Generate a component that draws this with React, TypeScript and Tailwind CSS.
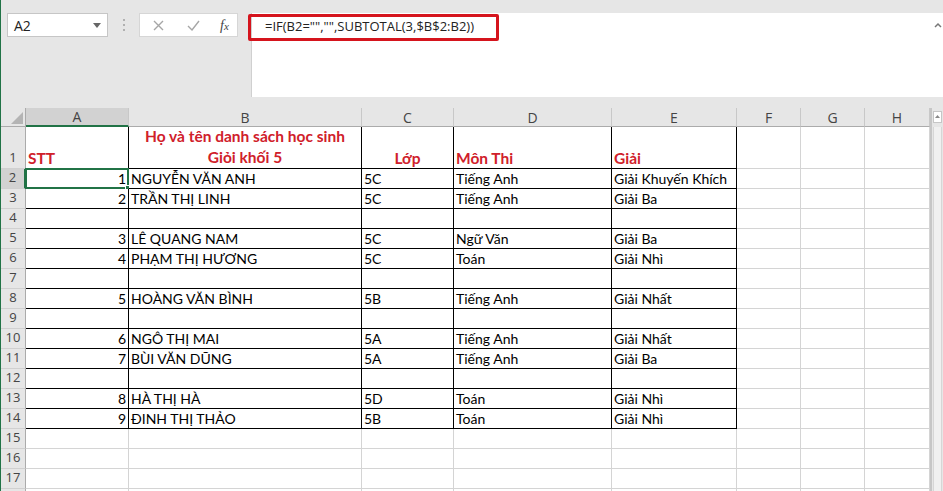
import { Fragment } from 'react';

type Row = { n: number; h: string; cells: string[] };

const colWidths = ['w-[103px]', 'w-[233px]', 'w-[92px]', 'w-[158px]', 'w-[125px]', 'w-[64px]', 'w-[64px]', 'w-[65px]'];
const colLetters = ['A', 'B', 'C', 'D', 'E', 'F', 'G', 'H'];

const students = [
  ['1', 'NGUYỄN VĂN ANH', '5C', 'Tiếng Anh', 'Giải Khuyến Khích'],
  ['2', 'TRẦN THỊ LINH', '5C', 'Tiếng Anh', 'Giải Ba'],
  [],
  ['3', 'LÊ QUANG NAM', '5C', 'Ngữ Văn', 'Giải Ba'],
  ['4', 'PHẠM THỊ HƯƠNG', '5C', 'Toán', 'Giải Nhì'],
  [],
  ['5', 'HOÀNG VĂN BÌNH', '5B', 'Tiếng Anh', 'Giải Nhất'],
  [],
  ['6', 'NGÔ THỊ MAI', '5A', 'Tiếng Anh', 'Giải Nhất'],
  ['7', 'BÙI VĂN DŨNG', '5A', 'Tiếng Anh', 'Giải Ba'],
  [],
  ['8', 'HÀ THỊ HÀ', '5D', 'Toán', 'Giải Nhì'],
  ['9', 'ĐINH THỊ THẢO', '5B', 'Toán', 'Giải Nhì'],
];

const rows: Row[] = [
  ...students.map((cells, i) => ({ n: i + 2, h: 'h-[20px]', cells })),
  { n: 15, h: 'h-[20px]', cells: [] },
  { n: 16, h: 'h-[20px]', cells: [] },
  { n: 17, h: 'h-[20px]', cells: [] },
];

const cellFont = { fontFamily: 'Lato, "Noto Sans", sans-serif' };
const uiFont = { fontFamily: '"Open Sans", "Noto Sans", sans-serif' };

function FormulaBar() {
  return (
    <div className="h-[108px] flex items-start pt-[13px] relative">
      {/* name box */}
      <div className="ml-[6px] w-[101px] h-[24px] bg-white border border-[#c6c6c6] flex items-center justify-between pl-[6px] pr-[6px]">
        <span className="text-[14px] text-[#222]" style={uiFont}>A2</span>
        <svg width="8" height="5" viewBox="0 0 8 5"><path d="M0 0h8L4 5z" fill="#666" /></svg>
      </div>
      <div className="w-[31px] h-[24px] flex flex-col items-center justify-center gap-[3px]">
        <span className="w-[2px] h-[2px] bg-[#b0b0b0]" />
        <span className="w-[2px] h-[2px] bg-[#b0b0b0]" />
        <span className="w-[2px] h-[2px] bg-[#b0b0b0]" />
      </div>
      {/* cancel / enter / fx */}
      <div className="w-[99px] h-[24px] bg-white border border-[#d6d6d6] flex items-center">
        <svg className="ml-[13px]" width="11" height="11" viewBox="0 0 11 11">
          <path d="M1 1l9 9M10 1l-9 9" stroke="#a6a6a6" strokeWidth="1.4" />
        </svg>
        <svg className="ml-[23px]" width="13" height="11" viewBox="0 0 13 11">
          <path d="M1 6l4 4 7-9" stroke="#a6a6a6" strokeWidth="1.4" fill="none" />
        </svg>
        <span className="ml-[20px] text-[14px] italic text-[#444]" style={{ fontFamily: '"Liberation Serif", serif' }}>
          f<span className="text-[11px]">x</span>
        </span>
      </div>
      {/* formula input */}
      <div className="ml-[13px] flex-1 h-[84px] bg-white border-l border-[#d0d0d0] flex justify-between pl-[13px] pr-[1px]">
        <span className="text-[13px] text-[#222] mt-[4px]" style={uiFont}>
          =IF(B2="","",SUBTOTAL(3,$B$2:B2))
        </span>
        <svg className="mt-[9px]" width="8" height="6" viewBox="0 0 8 6">
          <path d="M1 5l3-3 3 3" stroke="#777" strokeWidth="1.5" fill="none" />
        </svg>
      </div>
      {/* highlight around the formula */}
      <div className="absolute left-[247px] top-[14px] w-[251px] h-[27px] border-[3px] border-[#d5141d] rounded-[2px]" />
    </div>
  );
}

function HeaderRow() {
  return (
    <div className="flex h-[19px]">
      <div className="w-[25px] bg-[#e6e6e6] border-r border-b border-[#ababab] flex items-end justify-end p-[2px]">
        <svg width="12" height="12" viewBox="0 0 12 12"><path d="M12 0v12H0z" fill="#b4b4b4" /></svg>
      </div>
      {colLetters.map((l, i) => (
        <div
          key={l}
          className={`${colWidths[i]} flex items-center justify-center text-[14px] text-[#444] border-r border-[#c8c8c8] ${
            i === 0 ? 'bg-[#d2d2d2] border-b-2 border-b-[#217346]' : 'bg-[#e6e6e6] border-b border-b-[#ababab]'
          }`}
          style={uiFont}
        >
          {l}
        </div>
      ))}
      <ScrollTop />
    </div>
  );
}

function ScrollTop() {
  return (
    <div className="flex-1 bg-[#e6e6e6] border-l-2 border-[#c6c6c6] flex justify-center pt-[3px]">
      <div className="w-[9px] h-[12px] bg-white border border-[#c6c6c6] flex justify-center pt-[3px]">
        <svg width="5" height="3" viewBox="0 0 5 3"><path d="M0 3l2.5-3L5 3z" fill="#888" /></svg>
      </div>
    </div>
  );
}

function RowHeader({ n, h, active }: { n: number; h: string; active?: boolean }) {
  return (
    <div
      className={`w-[25px] ${h} flex items-end justify-center pb-[1px] text-[13px] text-[#444] border-b border-[#d0d0d0] ${
        active ? 'bg-[#d2d2d2] border-r-2 border-r-[#217346]' : 'bg-[#e6e6e6] border-r border-r-[#ababab]'
      }`}
      style={uiFont}
    >
      {n}
    </div>
  );
}

function Cell({ row, col, text, h }: { row: number; col: number; text?: string; h: string }) {
  const inTable = col < 5 && row <= 14;
  const border = inTable ? 'border-black' : 'border-[#d4d4d4]';
  const align = col === 0 ? 'justify-end' : 'justify-start';
  const selected = row === 2 && col === 0;
  return (
    <div className={`${colWidths[col]} ${h} border-r border-b ${border} bg-white flex items-end ${align} px-[2px] text-[14px] leading-[18px] text-black relative whitespace-nowrap`}>
      {text}
      {selected && (
        <>
          <div className="absolute -left-[1px] -top-[1px] -right-[1px] -bottom-[1px] border-2 border-[#217346]" />
          <div className="absolute -right-[4px] -bottom-[4px] w-[7px] h-[7px] bg-[#217346] border border-white" />
        </>
      )}
    </div>
  );
}

function TitleRow() {
  return (
    <div className="flex h-[42px]" style={cellFont}>
      <RowHeader n={1} h="h-[42px]" />
      <div className="w-[103px] border-r border-b border-black bg-white flex items-end px-[2px] text-[15.5px] leading-[19px] font-bold text-[#d0202a]">STT</div>
      <div className="w-[233px] border-r border-b border-black bg-white flex flex-col items-center justify-end text-[15.5px] leading-[21px] font-bold text-[#d0202a]">
        <span>Họ và tên danh sách học sinh</span>
        <span>Giỏi khối 5</span>
      </div>
      <div className="w-[92px] border-r border-b border-black bg-white flex items-end justify-center px-[2px] text-[15.5px] leading-[19px] font-bold text-[#d0202a]">Lớp</div>
      <div className="w-[158px] border-r border-b border-black bg-white flex items-end px-[2px] text-[15.5px] leading-[19px] font-bold text-[#d0202a]">Môn Thi</div>
      <div className="w-[125px] border-r border-b border-black bg-white flex items-end px-[2px] text-[15.5px] leading-[19px] font-bold text-[#d0202a]">Giải</div>
      {[5, 6, 7].map((c) => (
        <div key={c} className={`${colWidths[c]} border-r border-b border-[#d4d4d4] bg-white`} />
      ))}
      <ScrollTrack />
    </div>
  );
}

function ScrollTrack() {
  return <div className="flex-1 bg-[#e6e6e6] border-l-2 border-[#c6c6c6]"><div className="ml-[1px] w-[9px] h-full bg-[#f0f0f0] border-x border-[#d6d6d6]" /></div>;
}

export default function App() {
  return (
    <div className="w-[943px] h-[491px] overflow-hidden bg-white border-l border-[#217346]">
      <div className="bg-[#e6e6e6]">
        <FormulaBar />
        <HeaderRow />
      </div>
      <TitleRow />
      {rows.map((r) => (
        <div key={r.n} className="flex" style={cellFont}>
          <RowHeader n={r.n} h={r.h} active={r.n === 2} />
          {colLetters.map((_, c) => (
            <Fragment key={c}>
              <Cell row={r.n} col={c} text={r.cells[c]} h={r.h} />
            </Fragment>
          ))}
          <ScrollTrack />
        </div>
      ))}
      <div className="flex h-[20px]">
        <div className="w-[25px] bg-[#e6e6e6] border-r border-[#ababab]" />
        {colLetters.map((_, c) => (
          <div key={c} className={`${colWidths[c]} border-r border-[#d4d4d4]`} />
        ))}
        <ScrollTrack />
      </div>
    </div>
  );
}
